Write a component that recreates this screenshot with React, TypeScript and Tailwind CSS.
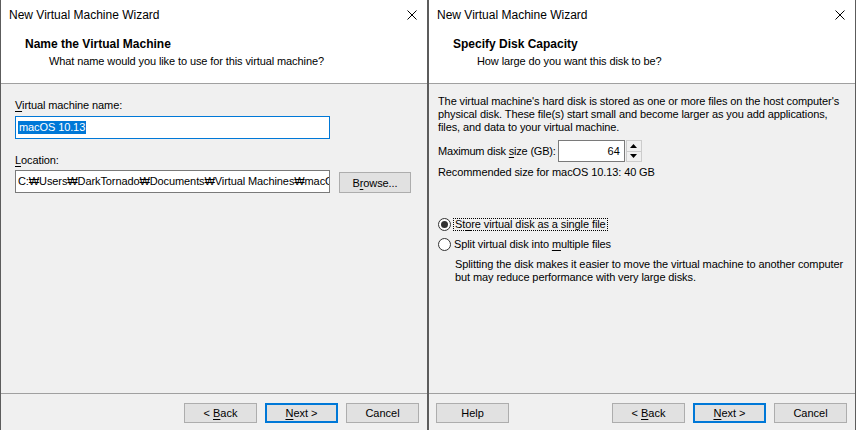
import type { ReactNode } from 'react';

const CloseIcon = () => (
  <svg width="10" height="10" viewBox="0 0 10 10" className="block">
    <path d="M0.5 0.5 L9.5 9.5 M9.5 0.5 L0.5 9.5" stroke="#000" strokeWidth="1" fill="none" />
  </svg>
);

type BtnProps = {
  children: ReactNode;
  primary?: boolean;
};

const Btn = ({ children, primary }: BtnProps) => (
  <div
    className={`flex h-[20px] w-[73px] items-center justify-center bg-[#e1e1e1] text-[11px] leading-none text-black ${
      primary ? 'border-2 border-[#0078d7]' : 'border border-[#adadad]'
    }`}
  >
    <span className="whitespace-pre">{children}</span>
  </div>
);

const Key = ({ children }: { children: ReactNode }) => (
  <span className="underline decoration-1 underline-offset-[2px]">{children}</span>
);

type DialogProps = {
  heading: string;
  sub: string;
  children: ReactNode;
  footer: ReactNode;
};

const Dialog = ({ heading, sub, children, footer }: DialogProps) => (
  <div className="flex w-[426px] flex-col bg-[#f0f0f0]">
    <div className="h-[84px] border-b border-[#a0a0a0] bg-white">
      <div className="flex h-[30px] items-center justify-between pl-[8px] pr-[10px]">
        <span className="text-[12px] text-black">New Virtual Machine Wizard</span>
        <CloseIcon />
      </div>
      <div className="pl-[24px] pt-[7px] leading-[14px] text-black">
        <div className="text-[12px] font-bold">{heading}</div>
        <div className="mt-[3px] pl-[24px] text-[11px] tracking-[-0.1px]">{sub}</div>
      </div>
    </div>
    <div className="flex-1">{children}</div>
    <div className="flex h-[37px] items-start border-t border-[#a0a0a0] px-[8px] pt-[9px]">
      {footer}
    </div>
  </div>
);

const Radio = ({ checked }: { checked?: boolean }) => (
  <div className="flex h-[13px] w-[13px] shrink-0 items-center justify-center rounded-full border border-[#333333] bg-white">
    {checked && <div className="h-[7px] w-[7px] rounded-full bg-[#333333]" />}
  </div>
);

const Spinner = () => (
  <div className="ml-[1px] flex h-[22px] w-[16px] flex-col border border-[#cccccc] bg-[#f0f0f0]">
    <div className="flex flex-1 items-center justify-center border-b border-[#cccccc]">
      <svg width="7" height="4" viewBox="0 0 7 4"><path d="M0 4 L3.5 0 L7 4 Z" fill="#000" /></svg>
    </div>
    <div className="flex flex-1 items-center justify-center">
      <svg width="7" height="4" viewBox="0 0 7 4"><path d="M0 0 L3.5 4 L7 0 Z" fill="#000" /></svg>
    </div>
  </div>
);

export default function App() {
  return (
    <div className="flex h-[430px] w-[856px] gap-[2px] overflow-hidden bg-[#5c5c5c] px-[1px] font-['Liberation_Sans',Arial,sans-serif] text-black">
      <Dialog
        heading="Name the Virtual Machine"
        sub="What name would you like to use for this virtual machine?"
        footer={
          <div className="flex flex-1 justify-end gap-[8px]">
            <Btn>{'< '}<Key>B</Key>ack</Btn>
            <Btn primary><Key>N</Key>{'ext >'}</Btn>
            <Btn>Cancel</Btn>
          </div>
        }
      >
        <div className="pl-[14px] pt-[14px] text-[11px] leading-[14px] tracking-[-0.1px]">
          <div><Key>V</Key>irtual machine name:</div>
          <div className="mt-[4px] flex h-[23px] w-[315px] items-center border border-[#0078d7] bg-white pl-[2px]">
            <span className="bg-[#0078d7] px-[1px] leading-[13px] text-white">macOS 10.13</span>
          </div>
          <div className="mt-[14px]"><Key>L</Key>ocation:</div>
          <div className="mt-[3px] flex items-end">
            <div className="h-[23px] w-[315px] shrink-0 overflow-hidden border border-[#7a7a7a] bg-white pl-[2px]">
              <div className="w-[600px] whitespace-nowrap leading-[21px]">
                C:₩Users₩DarkTornado₩Documents₩Virtual Machines₩macOS 10.13
              </div>
            </div>
            <div className="ml-[9px] flex h-[21px] w-[72px] items-center justify-center border border-[#adadad] bg-[#e1e1e1]">
              <span>B<Key>r</Key>owse...</span>
            </div>
          </div>
        </div>
      </Dialog>

      <Dialog
        heading="Specify Disk Capacity"
        sub="How large do you want this disk to be?"
        footer={
          <div className="flex flex-1 items-start">
            <div className="-ml-[1px]">
              <Btn>Help</Btn>
            </div>
            <div className="flex flex-1 justify-end gap-[8px]">
              <Btn>{'< '}<Key>B</Key>ack</Btn>
              <Btn primary><Key>N</Key>{'ext >'}</Btn>
              <Btn>Cancel</Btn>
            </div>
          </div>
        }
      >
        <div className="whitespace-nowrap px-[9px] pt-[11px] text-[11px] leading-[13px] tracking-[-0.1px]">
          <p>
            The virtual machine's hard disk is stored as one or more files on the host computer's
            <br />
            physical disk. These file(s) start small and become larger as you add applications,
            <br />
            files, and data to your virtual machine.
          </p>
          <div className="mt-[6px] flex h-[22px] items-center">
            <span className="mr-[2px] shrink-0 tracking-[-0.2px]">Maximum disk <Key>s</Key>ize (GB):</span>
            <div className="flex h-[22px] w-[67px] shrink-0 items-center justify-end border border-[#7a7a7a] bg-white pr-[4px]">
              64
            </div>
            <Spinner />
          </div>
          <div className="mt-[4px]">Recommended size for macOS 10.13: 40 GB</div>
          <div className="mt-[37px] flex h-[16px] items-center gap-[2px]">
            <Radio checked />
            <span className="border border-dotted border-[#000] px-[1px] leading-[11px]">
              St<Key>o</Key>re virtual disk as a single file
            </span>
          </div>
          <div className="mt-[4px] flex h-[16px] items-center gap-[3px]">
            <Radio />
            <span>Split virtual disk into <Key>m</Key>ultiple files</span>
          </div>
          <div className="mt-[6px] pl-[17px]">
            Splitting the disk makes it easier to move the virtual machine to another computer
            <br />
            but may reduce performance with very large disks.
          </div>
        </div>
      </Dialog>
    </div>
  );
}
